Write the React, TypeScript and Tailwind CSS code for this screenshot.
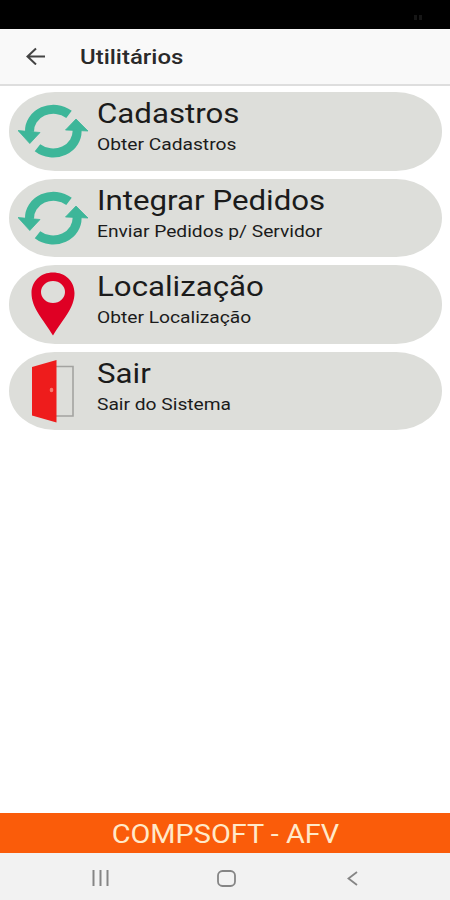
import type { ReactNode } from "react";

function SyncIcon() {
  return (
    <svg width="70" height="54" viewBox="18 104.500 70 54" fill="none">
      <path d="M29.500 132.500 A24 21.700 0 0 1 69 114.900" stroke="#3db699" strokeWidth="9" />
      <path d="M18 131 L40 133 L29.800 144 Z" fill="#3db699" stroke="#3db699" strokeWidth="0.800" />
      <path d="M37.500 148.300 A24 21.700 0 0 0 77 130" stroke="#3db699" strokeWidth="9" />
      <path d="M76 119.500 L88 131.500 L65.500 130.500 Z" fill="#3db699" stroke="#3db699" strokeWidth="0.800" />
    </svg>
  );
}

function PinIcon() {
  return (
    <svg width="44" height="64" viewBox="0 0 44 64">
      <path
        fillRule="evenodd"
        fill="#df0024"
        d="M22 .5 C34 .5 43.500 9 43.500 21 C43.500 36 32 47 22 63.500 C12 47 .5 36 .5 21 C.5 9 10 .5 22 .5 Z M22 9 A12 11 0 1 0 22 31 A12 11 0 1 0 22 9 Z"
      />
    </svg>
  );
}

function DoorIcon() {
  return (
    <svg width="44" height="64" viewBox="0 0 44 64">
      <path d="M24 7.500 H42 V57 H24" fill="none" stroke="#a3a3a0" strokeWidth="1.600" />
      <path d="M1 8 L25.500 1 V63.500 L1 56.500 Z" fill="#ee1c1c" />
      <ellipse cx="20.500" cy="31" rx="1.800" ry="2.300" fill="#f47a70" />
    </svg>
  );
}

type CardProps = { icon: ReactNode; title: string; detail: string };

function Card({ icon, title, detail }: CardProps) {
  return (
    <button className="flex h-[78.500px] w-full shrink-0 items-start rounded-[46px/39.25px] bg-[#dddeda] text-left">
      <span className="flex h-full w-[88px] shrink-0 items-center justify-center">{icon}</span>
      <span className="flex flex-col items-start whitespace-nowrap text-[#1b1b1b]">
        <span className="mt-1.5 origin-left scale-x-[1.157] text-[27px] leading-8">{title}</span>
        <span className="mt-[5px] origin-left scale-x-[1.2] text-[16px] leading-5">{detail}</span>
      </span>
    </button>
  );
}

export default function App() {
  return (
    <div className="flex h-[900px] w-[450px] flex-col overflow-hidden bg-white font-[Roboto,sans-serif]">
      <div className="flex h-[28.500px] shrink-0 justify-end gap-0.5 bg-black pt-[15px] pr-7">
        <span className="h-[5px] w-[3px] bg-[#161616]" />
        <span className="h-[5px] w-[3px] bg-[#161616]" />
      </div>
      <header className="flex h-[57.500px] shrink-0 items-center border-b-2 border-[#dedede] bg-[#f9f9f9] pl-[26px]">
        <svg width="20" height="18" viewBox="0 0 20 18" fill="none" stroke="#444" strokeWidth="2">
          <path d="M19 9.500 H2 M10 1.500 L1.500 9.500 L10 17.500" />
        </svg>
        <h1 className="mt-0.5 ml-[33.500px] origin-left scale-x-[1.14] text-[21px] font-medium text-[#2a2a2a]">
          Utilitários
        </h1>
      </header>
      <main className="flex flex-1 flex-col gap-[8.100px] pt-1.5 pr-2 pl-[9px]">
        <Card icon={<SyncIcon />} title="Cadastros" detail="Obter Cadastros" />
        <Card icon={<SyncIcon />} title="Integrar Pedidos" detail="Enviar Pedidos p/ Servidor" />
        <Card icon={<PinIcon />} title="Localização" detail="Obter Localização" />
        <Card icon={<DoorIcon />} title="Sair" detail="Sair do Sistema" />
      </main>
      <footer className="flex h-10 shrink-0 items-center justify-center bg-[#fa5c0a] pt-0.5 text-[#ffe9c9]">
        <span className="scale-x-[1.11] text-[26px] whitespace-nowrap">COMPSOFT - AFV</span>
      </footer>
      <nav className="flex h-[47px] shrink-0 items-center bg-[#f2f2f2] pt-[3px]">
        <svg className="ml-[92px]" width="17" height="16" viewBox="0 0 17 16" stroke="#858585" strokeWidth="2">
          <path d="M1.500 0 V16 M8.500 0 V16 M15.500 0 V16" />
        </svg>
        <svg className="ml-[108px]" width="19" height="17" viewBox="0 0 19 17" fill="none" stroke="#858585" strokeWidth="1.800">
          <rect x="1" y="1" width="17" height="15" rx="4.500" />
        </svg>
        <svg className="ml-[111px]" width="11" height="15" viewBox="0 0 11 15" fill="none" stroke="#858585" strokeWidth="1.800">
          <path d="M10 1 L1.500 7.500 L10 14" />
        </svg>
      </nav>
    </div>
  );
}
